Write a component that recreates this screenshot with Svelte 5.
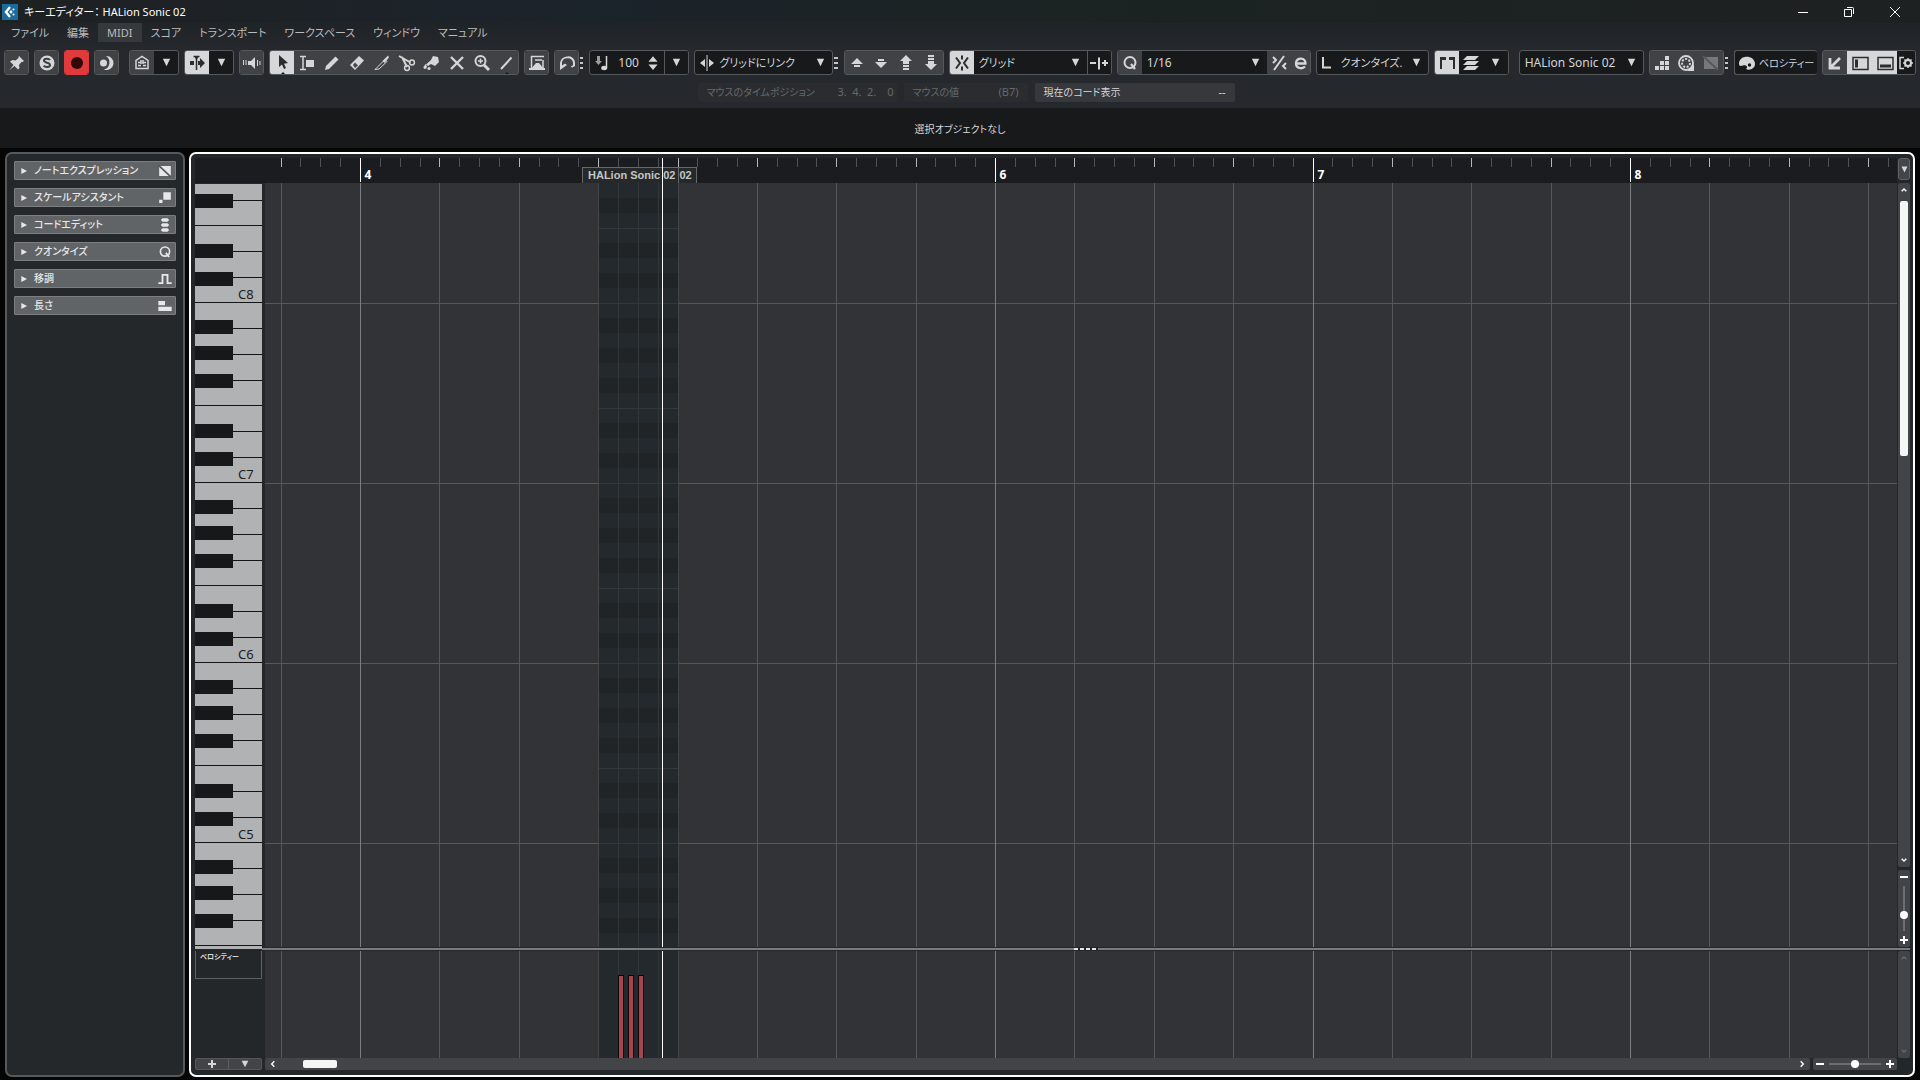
<script lang="ts">
  const menus = ["ファイル", "編集", "MIDI", "スコア", "トランスポート", "ワークスペース", "ウィンドウ", "マニュアル"];

  const sections = [
    { name: "ノートエクスプレッション", icon: "expression" },
    { name: "スケールアシスタント", icon: "scale" },
    { name: "コードエディット", icon: "chord" },
    { name: "クオンタイズ", icon: "q" },
    { name: "移調", icon: "transpose" },
    { name: "長さ", icon: "length" },
  ];

  const tools = ["arrow", "range", "pencil", "eraser", "knife", "scissors", "glue", "mute", "zoom", "line"];
  let tool = $state("arrow");

  // icons are drawn in a 24 x 24 box
  const icons: Record<string, string> = {
    pin: `<path d="M14 5l5 5-1.500 1-1 0-2.500 3 .5 3-1.500 1.500-3.500-3.500-5 4 4-5-3.500-3.500L7.500 9l3 .5 3-2.500 0-1z" fill="currentColor"/>`,
    solo: `<circle cx="12" cy="12" r="7.500" fill="currentColor"/><path d="M15 9c-1-1.500-6-1.800-6 .6C9 12.400 15 11 15 14c0 2.600-5 2.500-6.300.7" fill="none" stroke="#3d3f42" stroke-width="2"/>`,
    rec: `<circle cx="12" cy="12" r="6" fill="#300808"/>`,
    moon: `<path d="M11 5a7 7 0 1 1-2 13.500A7.500 7.500 0 0 0 11 5z" fill="currentColor"/><circle cx="8.500" cy="12" r="3.500" fill="currentColor"/>`,
    house: `<path d="M6 17.500V9.500L12 5.500l6 4v8z" fill="none" stroke="currentColor" stroke-width="1.500"/><path d="M11 9v4M8 11.500h3M13 9v4M13 11.500h3M8 14.500h3M13 14.500h3" stroke="currentColor" stroke-width="1.500"/>`,
    autoscroll: `<path d="M5 10h4v4H5zM13 10h2V7l5 5-5 5v-3h-2z" fill="currentColor"/><path d="M11.500 6v13M8.500 5.500h6" stroke="currentColor" stroke-width="1.500"/><path d="M9 5h5l-2.500 4z" fill="currentColor"/>`,
    speaker: `<path d="M8 10h3l4-4v12l-4-4H8z" fill="currentColor"/><path d="M3.500 9v5M6 9v5M17.500 9v6M20 10v4" stroke="currentColor"/>`,
    arrow: `<path d="M9 4v12l3-2.500 2 4.500 2-1-2-4.300 4-.7z" fill="currentColor"/>`,
    range: `<path d="M5 5.500h6M5 18.500h6M8 5.500v13" stroke="currentColor" stroke-width="1.500"/><path d="M11 9h8v7h-8z" fill="currentColor"/>`,
    pencil: `<path d="M5 19l1-4L15.500 5.500l3 3L9 18z" fill="currentColor"/>`,
    eraser: `<path d="M5 14L14 5l5 4.500L10 19z" fill="currentColor"/><path d="M8 14l2-2.500 3 3-3 2.500z" fill="#45474a"/>`,
    knife: `<path d="M5 18.500L15 8.500l2 2L9 18z" fill="none" stroke="currentColor"/><path d="M12.500 10L18 4.500l1 2-4.500 5.500z" fill="currentColor"/>`,
    scissors: `<path d="M4 5l11.500 6.500M7 6l5 10" stroke="currentColor" stroke-width="2" fill="none"/><circle cx="17" cy="11.500" r="2.400" fill="none" stroke="currentColor" stroke-width="1.500"/><circle cx="12" cy="17" r="2.400" fill="none" stroke="currentColor" stroke-width="1.500"/>`,
    glue: `<path d="M13 5l5 1 1 5-4 4-4-2-3 2-2-1.500 5-4.500z" fill="currentColor"/><path d="M5.500 13c4 5-2.500 6.500-2 3z" fill="currentColor"/><circle cx="9" cy="17.500" r="1.600" fill="currentColor"/>`,
    mute: `<path d="M6 6l12 12M18 6L6 18" stroke="currentColor" stroke-width="2.400"/>`,
    zoom: `<circle cx="10.500" cy="10" r="5" fill="none" stroke="currentColor" stroke-width="2"/><path d="M14 14l5 5" stroke="currentColor" stroke-width="3"/><path d="M8 10h5M10.500 7.500v5" stroke="currentColor" stroke-width="1.500"/>`,
    line: `<path d="M7 18L17.500 6.500" stroke="currentColor" stroke-width="2"/>`,
    independent: `<path d="M4 18h16" stroke="currentColor" stroke-width="2"/><path d="M6.500 5v12M18 9v8M6 5.500h13M10 9h7" stroke="currentColor" stroke-width="1.500"/><path d="M6 18l5-6h3l5 6z" fill="currentColor"/>`,
    loop: `<path d="M6 17v-5c0-7 13-8 13 0v2.500l-2.500 1.500" fill="none" stroke="currentColor" stroke-width="2"/><path d="M5 12v7l7-5-2-1.500-3 2V12z" fill="currentColor"/>`,
    velocity: `<path d="M7 5h3v5h2l-3.500 4L5 10h2z" fill="#999b9c"/><path d="M16.500 5v12" stroke="currentColor" stroke-width="1.500"/><ellipse cx="14.200" cy="17" rx="3" ry="2.200" fill="currentColor"/>`,
    spin: `<path d="M7 10.500l5-6 5 6zM7 13.500l5 6 5-6z" fill="currentColor"/>`,
    link: `<path d="M12 4v16" stroke="currentColor"/><path d="M10 8v8l-5-4zM14 8v8l5-4z" fill="currentColor"/>`,
    up: `<path d="M6 13l6-6 6 6zM9 14h6v2H9z" fill="currentColor"/>`,
    down: `<path d="M6 11l6 6 6-6zM9 8h6v2H9z" fill="currentColor"/>`,
    octup: `<path d="M6 10l6-6 6 6zM9 10h6v3H9zM9 14h6v2H9zM9 17h6v2H9z" fill="currentColor"/>`,
    octdown: `<path d="M6 13l6 6 6-6zM9 10h6v3H9zM9 7h6v2H9zM9 4h6v2H9z" fill="currentColor"/>`,
    snap: `<path d="M12 4.500v4M12 15.500v4" stroke="currentColor" stroke-width="2"/><path d="M6 6.500l4 5.500-4 5.500M18 6.500L14 12l4 5.500" fill="none" stroke="currentColor" stroke-width="2"/>`,
    gridtype: `<path d="M3 12h6M12 6.500v12M15 12h6M18 9v6" stroke="currentColor" stroke-width="2"/>`,
    q: `<circle cx="12" cy="11.500" r="5.500" fill="none" stroke="currentColor" stroke-width="2"/><path d="M13 13l4 5" stroke="currentColor" stroke-width="2.200"/>`,
    iterate: `<path d="M17 5L7 19" stroke="currentColor" stroke-width="2"/><path d="M6 6l3 3-3 3M19 12l-3 3 3 3" fill="none" stroke="currentColor" stroke-width="2"/>`,
    edit: `<path d="M7 12.500h9.500c.5-6-9-7-9.500-.5-.3 5.500 6 6.500 9 3.500" fill="none" stroke="currentColor" stroke-width="2.300"/>`,
    lq: `<path d="M6 6v10.500h8" fill="none" stroke="currentColor" stroke-width="2"/>`,
    parts: `<path d="M5 6h6v3H7v9H5zM14 6h6v12h-2V9h-4z" fill="currentColor"/>`,
    layers: `<path d="M8 5h12l-4 4H4zM8 10h12l-4 4H4zM8 15h12l-4 4H4z" fill="currentColor"/>`,
    steps: `<path d="M5 15h4v4H5zM10 15h4v4h-4zM15 15h4v4h-4zM10 10h4v4h-4zM15 10h4v4h-4zM15 5h4v4h-4z" fill="currentColor"/>`,
    midi: `<circle cx="12" cy="12" r="7" fill="none" stroke="currentColor" stroke-width="1.800"/><circle cx="12" cy="12" r="4" fill="none" stroke="currentColor" stroke-width="2" stroke-dasharray="2 1.500"/><path d="M20 13v7h-7z" fill="currentColor"/>`,
    expression: `<path d="M5 6h14v12H5z" fill="currentColor"/><path d="M4 5l15 14" stroke="#55585a" stroke-width="2"/>`,
    palette: `<path d="M4 12c1-9 16-8 16 1 0 4-5 7-9 5 3-3-1-5-5-3-2 0-2-2-2-3z" fill="currentColor"/><circle cx="14.500" cy="14" r="1.700" fill="#17191b"/>`,
    corner: `<path d="M7 7v10h10M8 16L17 7" fill="none" stroke="currentColor" stroke-width="2.800"/>`,
    left: `<path d="M5 6.500h15v12H5z" fill="none" stroke="currentColor" stroke-width="1.500"/><path d="M7 8.500h3v8H7z" fill="currentColor"/>`,
    bottom: `<path d="M5 6.500h15v12H5z" fill="none" stroke="currentColor" stroke-width="1.500"/><path d="M7 13.500h11v3H7z" fill="currentColor"/>`,
    setup: `<path d="M10 6.500H6v11h4" fill="none" stroke="currentColor" stroke-width="1.500"/><circle cx="14" cy="12" r="3" fill="none" stroke="currentColor" stroke-width="2"/><path d="M14 7v2M14 15v2M9 12h2M17 12h2M10.500 8.500l1.500 1.500M16 14l1.500 1.500M17.500 8.500L16 10M12 14l-1.500 1.500" stroke="currentColor" stroke-width="1.500"/>`,
    scale: `<path d="M10 5h9v9h-9zM5 14h4v4H5z" fill="currentColor"/>`,
    chord: `<path d="M9 4h6l2 2-2 2H9L7 6zM9 10h6l2 2-2 2H9l-2-2zM9 16h6l2 2-2 2H9l-2-2z" fill="currentColor"/>`,
    transpose: `<path d="M4 17h5V7h6v10h5" fill="none" stroke="currentColor" stroke-width="2.200"/>`,
    length: `<path d="M4 6h8v5H4zM4 13h16v5H4z" fill="currentColor"/>`,
    min: `<path d="M7 12.500h10" stroke="currentColor"/>`,
    max: `<path d="M7.500 9.500h7v7h-7zM10 7.500h5.500a1 1 0 0 1 1 1V14" fill="none" stroke="currentColor"/>`,
    close: `<path d="M7 7l10 10M17 7L7 17" stroke="currentColor"/>`,
    plus: `<path d="M12 4v16M4 12h16" stroke="currentColor" stroke-width="4"/>`,
    minus: `<path d="M4 12h16" stroke="currentColor" stroke-width="4"/>`,
    tri: `<path d="M4 4h16l-8 16z" fill="currentColor"/>`,
    play: `<path d="M4 3v18l17-9z" fill="currentColor"/>`,
    chevUp: `<path d="M5 16l7-7 7 7" fill="none" stroke="currentColor" stroke-width="4"/>`,
    chevDown: `<path d="M5 8l7 7 7-7" fill="none" stroke="currentColor" stroke-width="4"/>`,
    chevLeft: `<path d="M16 4l-8 8 8 8" fill="none" stroke="currentColor" stroke-width="4"/>`,
    chevRight: `<path d="M8 4l8 8-8 8" fill="none" stroke="currentColor" stroke-width="4"/>`,
  };

  // time axis: 4 beats per bar, 4 ticks per beat
  const beatWidth = 79.375;
  const bar4 = 95;
  const timeX = (beat: number) => Math.round(bar4 + beat * beatWidth) + 0.5;
  const beats = Array.from({ length: 40 }, (_, i) => i - 1);
  const ticks = Array.from({ length: 160 }, (_, i) => (i - 4) / 4);
  const playhead = 397.5;
  const part = { from: timeX(3), to: timeX(4) };

  // pitch axis: one octave is 180px, the first C line lies at 118
  const octaves = [
    { c: 9, y: -62 },
    { c: 8, y: 118 },
    { c: 7, y: 298 },
    { c: 6, y: 478 },
    { c: 5, y: 658 },
    { c: 4, y: 838 },
  ];
  const whiteLines = [26, 52, 78, 103, 129, 155, 180];
  const blackKeys = [18, 44, 72, 122, 150];
  const blackRows = [15, 45, 75, 120, 150];
  const notes = [353, 363, 373];
</script>

{#snippet icon(name: string, size = 24)}
  <svg class="icon" width={size} height={size} viewBox="0 0 24 24" aria-hidden="true">{@html icons[name]}</svg>
{/snippet}

{#snippet btn(name: string, label: string, cls = "")}
  <button class="tb {cls}" aria-label={label}>{@render icon(name)}</button>
{/snippet}

{#snippet drop(label: string, value: string)}
  <label class="drop">
    <select aria-label={label}><option>{value}</option></select>
    {@render icon("tri", 11)}
  </label>
{/snippet}

<div class="app">
  <header>
    <div class="title">
      <svg width="16" height="16" viewBox="0 0 16 16" aria-hidden="true">
        <rect width="16" height="16" fill="#1d6a9c" />
        <path d="M8 3L4 8l4 5" fill="none" stroke="#fff" stroke-width="2.400" />
        <circle cx="9" cy="8" r="1.400" fill="#fff" /><circle cx="11.500" cy="5.500" r="1" fill="#fff" /><circle cx="11.500" cy="10.500" r="1" fill="#fff" />
      </svg>
      <h1>キーエディター： HALion Sonic 02</h1>
      <div class="window">
        <button aria-label="最小化">{@render icon("min")}</button>
        <button aria-label="元に戻す">{@render icon("max")}</button>
        <button aria-label="閉じる">{@render icon("close")}</button>
      </div>
    </div>
    <nav>
      {#each menus as menu}
        <button class:active={menu === "MIDI"}>{menu}</button>
      {/each}
    </nav>
    <div class="toolbar">
      <div class="group">{@render btn("pin", "ピン")}</div>
      <div class="group">{@render btn("solo", "ソロ")}</div>
      <div class="group rec">{@render btn("rec", "録音")}</div>
      <div class="group">{@render btn("moon", "レトロスペクティブ")}</div>
      <div class="group gap">{@render btn("house", "表示")}<button class="tb dark" aria-label="表示メニュー">{@render icon("tri", 11)}</button></div>
      <div class="group">{@render btn("autoscroll", "自動スクロール", "on")}<button class="tb dark" aria-label="自動スクロールメニュー">{@render icon("tri", 11)}</button></div>
      <div class="group">{@render btn("speaker", "試聴")}</div>
      <div class="group tools">
        {#each tools as t}
          <button class="tb" class:on={tool === t} class:more={t === "arrow" || t === "line"} aria-label={t} onclick={() => (tool = t)}>{@render icon(t)}</button>
        {/each}
      </div>
      <div class="group">{@render btn("independent", "独立")}</div>
      <div class="group">{@render btn("loop", "ループ")}</div>
      <span class="dots"></span>
      <div class="group field velo">
        {@render icon("velocity")}<input aria-label="ベロシティー値" value="100" />{@render icon("spin", 22)}
        <button class="tb dark split" aria-label="ベロシティーメニュー">{@render icon("tri", 11)}</button>
      </div>
      <div class="group field kana linkgrid">{@render icon("link")}{@render drop("グリッドにリンク", "グリッドにリンク")}</div>
      <span class="dots"></span>
      <div class="group">{@render btn("up", "上")}{@render btn("down", "下")}{@render btn("octup", "オクターブ上")}{@render btn("octdown", "オクターブ下")}</div>
      <div class="group field kana snapgroup">{@render btn("snap", "スナップ", "on")}{@render drop("スナップタイプ", "グリッド")}{@render btn("gridtype", "グリッドの種類", "dark split")}</div>
      <div class="group field quant">{@render btn("q", "クオンタイズ")}{@render drop("クオンタイズ値", "1/16")}{@render btn("iterate", "反復")}{@render btn("edit", "パネル", "short")}</div>
      <div class="group field kana lengthq">{@render icon("lq")}{@render drop("長さのクオンタイズ", "クオンタイズ.")}</div>
      <div class="group field">{@render btn("parts", "パート境界", "on")}{@render btn("layers", "アクティブパート", "dark")}<button class="tb dark" aria-label="パートメニュー">{@render icon("tri", 11)}</button></div>
      <div class="group field gap instrument">{@render drop("パート", "HALion Sonic 02")}</div>
      <div class="group">{@render btn("steps", "ステップ入力")}{@render btn("midi", "MIDI 入力")}{@render btn("expression", "ノートエクスプレッション", "off")}</div>
      <span class="dots"></span>
      <div class="group field color">{@render icon("palette")}<span>ベロシティー</span></div>
      <div class="group last">{@render btn("corner", "下ゾーンで開く")}{@render btn("left", "左ゾーン", "on")}{@render btn("bottom", "下ゾーン", "on")}{@render btn("setup", "設定", "dark short")}</div>
    </div>
    <div class="info">
      <p class="time"><span>マウスのタイムポジション</span><span class="num">3.&ensp;4.&ensp;2.&emsp;0</span></p>
      <p class="val"><span>マウスの値</span><span class="num">(B7)</span></p>
      <p class="chordview"><span>現在のコード表示</span><span class="num">--</span></p>
    </div>
  </header>

  <div class="status">選択オブジェクトなし</div>

  <main>
    <aside>
      {#each sections as s}
        <button class="section">{@render icon("play", 8)}<span>{s.name}</span>{@render icon(s.icon, 20)}</button>
      {/each}
    </aside>

    <section class="editor">
      <div class="ruler">
        <svg>
          {#each ticks as t}
            <line x1={timeX(t)} x2={timeX(t)} y1="0" y2="9" stroke={t % 1 === 0 ? "#b4b6b8" : "#4e5053"} />
          {/each}
          {#each [4, 6, 7, 8] as bar}
            <line x1={timeX((bar - 4) * 4)} x2={timeX((bar - 4) * 4)} y1="0" y2="24" stroke="#fff" />
            <text x={timeX((bar - 4) * 4) + 4} y="21">{bar}</text>
          {/each}
        </svg>
        <div class="parts">
          <span>HALion Sonic 02</span>
          <span>02</span>
        </div>
        <i class="cursor"></i>
      </div>
      <button class="rulermenu" aria-label="ルーラー">{@render icon("tri", 9)}</button>

      <div class="piano">
        <svg>
          {#each octaves as o}
            {#each whiteLines as l}
              <line x1="0" x2="67" y1={o.y + l - 179.5} y2={o.y + l - 179.5} stroke="#141516" />
            {/each}
            {#each blackKeys as k}
              <rect x="0" y={o.y + k - 180} width="38" height="14" fill="#17181a" />
            {/each}
            {#if o.c > 4 && o.c < 9}
              <text x="43" y={o.y - 3}>C{o.c}</text>
            {/if}
          {/each}
        </svg>
      </div>

      <svg class="grid">
        {#each octaves as o}
          <line x1="0" x2="100%" y1={o.y + 2.5} y2={o.y + 2.5} stroke="#56585b" />
        {/each}
        {#each beats as b}
          <line x1={timeX(b)} x2={timeX(b)} y1="0" y2="100%" stroke={b % 4 === 0 ? "#7b7d80" : "#55575a"} />
        {/each}
        <rect x={part.from} y="0" width={part.to - part.from} height="100%" fill="#23292c" />
        {#each octaves as o}
          {#each blackRows as r}
            <rect x={part.from} y={o.y + r - 178} width={part.to - part.from} height="15" fill="#212427" />
          {/each}
          <line x1={part.from} x2={part.to} y1={o.y - 72.5} y2={o.y - 72.5} stroke="#32383b" />
          <line x1={part.from} x2={part.to} y1={o.y + 2.5} y2={o.y + 2.5} stroke="#32383b" />
        {/each}
        {#each [3, 3.25, 3.5, 3.75, 4] as t}
          <line x1={timeX(t)} x2={timeX(t)} y1="0" y2="100%" stroke={t % 1 === 0 ? "#404446" : "#31383a"} />
        {/each}
        <line x1={playhead} x2={playhead} y1="0" y2="100%" stroke="#fff" />
      </svg>

      <div class="vscroll">
        <div class="bar">
          {@render icon("chevUp", 8)}<div class="track"><div class="thumb"></div></div>{@render icon("chevDown", 8)}
        </div>
        <div class="vzoom">
          {@render icon("minus", 12)}<input type="range" aria-label="縦ズーム" value="68" />{@render icon("plus", 12)}
        </div>
      </div>

      <div class="splitter"><i></i></div>

      <div class="lane">
        <button>ベロシティー</button>
      </div>
      <svg class="grid controller">
        {#each beats as b}
          <line x1={timeX(b)} x2={timeX(b)} y1="0" y2="100%" stroke={b % 4 === 0 ? "#7b7d80" : "#55575a"} />
        {/each}
        <rect x={part.from} y="0" width={part.to - part.from} height="100%" fill="#23292c" />
        {#each [3, 3.25, 3.5, 3.75, 4] as t}
          <line x1={timeX(t)} x2={timeX(t)} y1="0" y2="100%" stroke={t % 1 === 0 ? "#404446" : "#31383a"} />
        {/each}
        {#each notes as n}
          <rect x={n} y="24" width="6" height="90" fill="#130506" />
          <rect x={n + 1} y="25" width="4" height="90" fill="#a54452" />
        {/each}
        <line x1={playhead} x2={playhead} y1="0" y2="100%" stroke="#fff" />
      </svg>
      <div class="bar low">{@render icon("chevUp", 8)}<div class="track"></div>{@render icon("chevDown", 8)}</div>

      <div class="lanebtns">
        <button aria-label="レーンを追加">{@render icon("plus", 12)}</button>
        <button aria-label="レーンメニュー">{@render icon("tri", 10)}</button>
      </div>
      <div class="hscroll">
        <div class="hbar">{@render icon("chevLeft", 8)}<div class="track"><div class="thumb"></div></div>{@render icon("chevRight", 8)}</div>
        <div class="hzoom">{@render icon("minus", 12)}<input type="range" aria-label="横ズーム" value="51" />{@render icon("plus", 12)}</div>
      </div>
    </section>
  </main>
</div>

<style>
  :global(body) {
    background: #050505;
  }
  * {
    box-sizing: border-box;
    margin: 0;
    padding: 0;
  }
  .app {
    display: flex;
    flex-direction: column;
    height: 100vh;
    overflow: hidden;
    font-family: "Noto Sans", "Noto Sans CJK JP", sans-serif;
    font-feature-settings: "palt";
    font-size: 12px;
    line-height: 18px;
    color: #d4d6d7;
  }
  button, select, input {
    font: inherit;
    font-feature-settings: inherit;
    color: inherit;
    background: none;
    border: none;
    border-radius: 0;
    outline: none;
  }
  .icon {
    display: block;
    flex: none;
  }

  header {
    background: linear-gradient(#1b2023, #25282c 50px);
    height: 108px;
  }
  .title {
    display: flex;
    align-items: center;
    gap: 6px;
    height: 23px;
    padding: 0 2px;
    background: linear-gradient(90deg, #1e2122, #1b232b 30%, #1b2322 60%, #1e2121);
  }
  h1 {
    flex: 1;
    font-size: 11px;
    font-weight: 400;
    color: #fff;
  }
  .window {
    display: flex;
    align-items: center;
    color: #fff;
  }
  .window button {
    width: 46px;
    display: flex;
    justify-content: center;
  }
  nav {
    display: flex;
    height: 19px;
    padding-left: 2px;
    font-size: 11px;
  }
  nav button {
    padding: 0 9px;
    color: #b9bbbc;
    line-height: 19px;
  }
  nav .active {
    background: #36393c;
  }

  .toolbar {
    display: flex;
    gap: 5px;
    height: 25px;
    margin: 8px 4px;
  }
  .group {
    display: flex;
    align-items: center;
    flex: none;
    height: 25px;
    border: 1px solid #56595b;
    border-radius: 3px;
    background: #404245;
    overflow: hidden;
  }
  .gap {
    margin-left: 5px;
  }
  .last {
    margin-left: auto;
  }
  .tb {
    width: 25px;
    height: 25px;
    flex: none;
    display: flex;
    align-items: center;
    justify-content: center;
    background: #404245;
  }
  .tb:first-child,
  .tb:last-child {
    width: 24px;
  }
  .tb:first-child:last-child {
    width: 23px;
  }
  .tb.short {
    width: 18px;
  }
  .tb.dark {
    background: #17191b;
  }
  .tb.on {
    background: #d6d7d8;
    color: #2b2d2f;
  }
  .tb.off {
    color: #76787a;
  }
  .tb.split {
    border-left: 1px solid #56595b;
  }
  .rec,
  .rec .tb {
    background: #df3a3c;
    border-color: #df3a3c;
  }
  .more {
    position: relative;
  }
  .more::after {
    content: "";
    position: absolute;
    left: 10px;
    bottom: 0;
    border: 3px solid transparent;
    border-top: 0;
    border-bottom-color: #17191b;
  }
  .dots {
    width: 4px;
    height: 12px;
    align-self: center;
    margin: 0 1px 0 -4px;
    background: repeating-linear-gradient(#c4c6c7 0 2px, transparent 2px 5px);
  }
  .field {
    background: #17191b;
  }
  .kana {
    font-size: 11px;
  }
  .velo {
    width: 100px;
  }
  .velo input {
    flex: 1;
    min-width: 0;
    padding-left: 4px;
    font-size: 12px;
  }
  .linkgrid {
    width: 139px;
  }
  .linkgrid .drop select {
    padding-left: 0;
  }
  .snapgroup {
    width: 163px;
  }
  .quant {
    width: 194px;
  }
  .lengthq {
    width: 113px;
  }
  .instrument {
    width: 125px;
  }
  .color {
    width: 83px;
    font-size: 10px;
    white-space: nowrap;
    border-right: 0;
  }
  .drop {
    flex: 1;
    min-width: 0;
    display: flex;
    align-items: center;
    padding-right: 6px;
  }
  .drop select {
    flex: 1;
    min-width: 0;
    appearance: none;
    padding-left: 5px;
  }
  .lengthq .drop select {
    padding-left: 0;
  }

  .info {
    display: flex;
    justify-content: center;
    gap: 7px;
    padding-left: 12px;
    font-size: 10px;
  }
  .info p {
    display: flex;
    justify-content: space-between;
    height: 19px;
    padding: 0 9px;
    color: #66696b;
    background: #2a2c2f;
    border-radius: 2px;
    white-space: nowrap;
  }
  .info .num {
    font-size: 11px;
  }
  .info .time {
    width: 199px;
    padding-right: 3px;
  }
  .info .val {
    width: 124px;
  }
  .info .chordview {
    width: 200px;
    color: #d4d6d7;
    background: #36383b;
  }

  .status {
    height: 40px;
    line-height: 42px;
    text-align: center;
    background: #17191a;
    font-size: 10px;
  }

  main {
    flex: 1;
    min-height: 0;
    display: flex;
    gap: 4px;
    padding: 4px 5px 3px;
    background: #050505;
  }
  aside {
    width: 180px;
    padding: 7px;
    display: flex;
    flex-direction: column;
    gap: 8px;
    background: #24282b;
    border: 2px solid #56585a;
    border-radius: 7px;
  }
  .section {
    display: flex;
    align-items: center;
    height: 19px;
    gap: 6px;
    padding: 0 0 0 5px;
    background: #616466;
    border: 1px solid #7c7e80;
    border-radius: 1px;
    font-size: 10px;
    font-weight: 500;
    color: #e6e7e8;
    text-align: left;
    line-height: 17px;
    white-space: nowrap;
  }
  .section span {
    flex: 1;
  }

  .editor {
    flex: 1;
    min-width: 0;
    display: grid;
    grid-template-columns: 67px 3px 1fr 1px 12px;
    grid-template-rows: 25px 1fr 4px 107px 12px;
    padding: 4px 3px 5px 4px;
    background: #24272a;
    border: 2px solid #fff;
    border-radius: 7px;
  }
  svg line, svg rect {
    shape-rendering: crispEdges;
  }
  .ruler {
    grid-area: 1 / 1 / 2 / 4;
    position: relative;
    background: #1b1c20;
    padding-left: 70px;
  }
  .ruler svg {
    display: block;
    width: 100%;
    height: 25px;
  }
  .ruler text {
    fill: #fff;
    font-size: 12px;
    font-weight: 700;
  }
  .parts {
    position: absolute;
    left: 387px;
    top: 9px;
    display: flex;
    height: 16px;
    border: 1px solid #66686a;
    border-bottom: 0;
    background: #26292a;
    font: 700 11px/14px "Liberation Sans", sans-serif;
    color: #c3c5c5;
    white-space: nowrap;
  }
  .parts span {
    padding: 0 3px 0 5px;
  }
  .parts span + span {
    padding: 0 4px 0 0;
    border-left: 1px solid #66686a;
  }
  .cursor {
    position: absolute;
    left: 467px;
    top: 0;
    width: 1px;
    height: 25px;
    background: #fff;
  }
  .rulermenu {
    grid-area: 1 / 5;
    height: 22px;
    display: grid;
    place-items: center;
    background: #434548;
    border: 1px solid #606264;
    border-radius: 3px;
  }
  .piano {
    grid-area: 2 / 1 / 4 / 2;
    min-height: 0;
    padding: 1px 0 2px;
  }
  .piano svg {
    display: block;
    width: 100%;
    height: 100%;
    background: #b1b2b4;
  }
  .piano text {
    font-size: 13px;
    fill: #1c1d1e;
  }
  .grid {
    grid-area: 2 / 3;
    width: 100%;
    height: 100%;
    min-height: 0;
    background: #323336;
  }
  .controller {
    grid-area: 4 / 3;
  }
  .vscroll {
    grid-area: 2 / 5;
    min-height: 0;
    display: flex;
    flex-direction: column;
    gap: 3px;
  }
  .bar, .vzoom {
    display: flex;
    flex-direction: column;
    align-items: center;
    background: #424447;
    border-radius: 2px;
    padding: 3px 0;
    color: #fff;
  }
  .bar {
    flex: 1;
    min-height: 0;
  }
  .bar .track {
    flex: 1;
    padding-top: 7px;
  }
  .bar .thumb {
    width: 8px;
    height: 39%;
    background: #f4f5f5;
    border-radius: 2px;
  }
  .low {
    grid-area: 4 / 5;
    color: #66686a;
  }
  .vzoom {
    height: 77px;
    padding: 1px 0;
    justify-content: space-between;
  }
  input[type="range"] {
    appearance: none;
    background: linear-gradient(#6b6d70, #6b6d70) center / 100% 2px no-repeat;
    width: 52px;
    height: 10px;
  }
  .vzoom input[type="range"] {
    writing-mode: vertical-lr;
    width: 10px;
    height: 45px;
    background-size: 2px 100%;
  }
  input[type="range"]::-webkit-slider-thumb {
    appearance: none;
    width: 8px;
    height: 8px;
    border-radius: 50%;
    background: #fff;
  }
  .splitter {
    grid-area: 3 / 2 / 4 / 6;
    display: flex;
    justify-content: center;
    align-items: center;
    background: linear-gradient(#24272a 1px, #7a7c7e 1px 3px, #24272a 3px);
  }
  .splitter i {
    width: 24px;
    height: 2px;
    background: repeating-linear-gradient(90deg, #e4e5e6 0 4px, #24272a 4px 6px);
  }
  .lane {
    grid-area: 4 / 1;
  }
  .lane button {
    display: block;
    width: 67px;
    height: 28px;
    padding: 0 4px 16px;
    border: 1px solid #5f6264;
    border-top: 0;
    font-size: 7px;
    line-height: 12px;
    font-weight: 700;
    text-align: left;
  }
  .lanebtns {
    grid-area: 5 / 1;
    display: flex;
    background: #424447;
    border: 1px solid #55585a;
    border-radius: 2px;
  }
  .lanebtns button {
    flex: 1;
    display: flex;
    align-items: center;
    justify-content: center;
  }
  .lanebtns button + button {
    border-left: 1px solid #5b5e60;
  }
  .hscroll {
    grid-area: 5 / 3;
    display: flex;
    gap: 3px;
    color: #fff;
  }
  .hbar {
    flex: 1;
    display: flex;
    align-items: center;
    padding: 0 4px;
    background: #424447;
    border-radius: 2px;
  }
  .hbar .track {
    flex: 1;
    padding-left: 26px;
  }
  .hbar .thumb {
    width: 34px;
    height: 8px;
    background: #f4f5f5;
    border-radius: 2px;
  }
  .hzoom {
    width: 84px;
    display: flex;
    align-items: center;
    justify-content: space-between;
    padding: 0 1px;
    background: #424447;
    border-radius: 2px;
  }
</style>
